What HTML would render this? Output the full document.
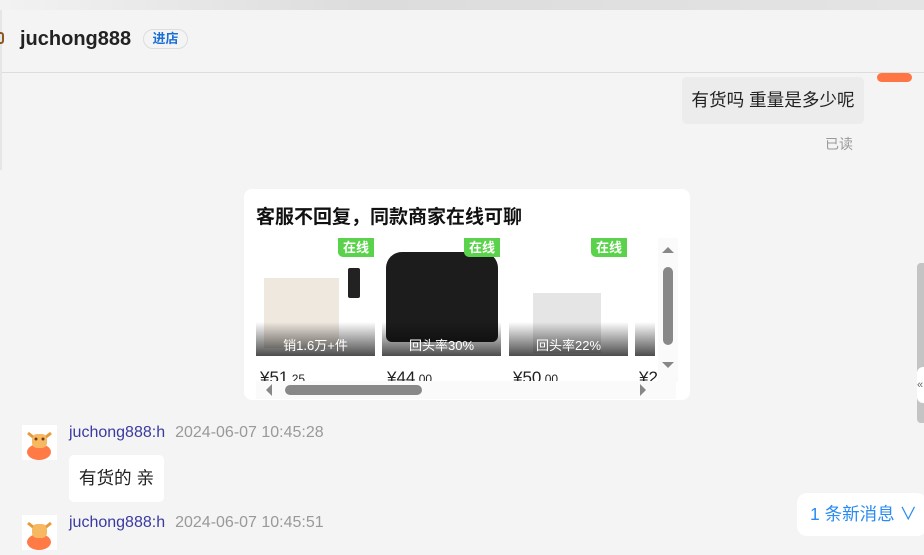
<!DOCTYPE html>
<html><head><meta charset="utf-8"><style>
*{margin:0;padding:0;box-sizing:border-box}
body{width:924px;height:538px;overflow:hidden;background:#f4f4f4;font-family:"Liberation Sans","Noto Sans CJK SC",sans-serif;position:relative}
.a{position:absolute}
.img{position:absolute;top:238px;width:119px;height:118px;overflow:hidden;background:#fff}
.ov{position:absolute;left:0;right:0;bottom:0;height:34px;background:linear-gradient(rgba(0,0,0,0),rgba(0,0,0,.7));color:#fff;font-size:13px;text-align:center;line-height:20px;padding-top:14px}
.tag{position:absolute;right:1px;top:0;background:#5bd24b;color:#fff;font-size:13px;font-weight:bold;padding:0 5px;line-height:19px;border-radius:0 0 0 5px}
.pr{position:absolute;top:368px;font-size:17px;color:#222}
.pr small{font-size:12px}
.name{color:#3a3aa0;font-size:16px}
.time{color:#999;font-size:16px;margin-left:10px}
</style></head><body>
<div class="a" style="left:0;top:0;width:924px;height:10px;background:linear-gradient(90deg,#f2f2f2,#dcdcdc 40%,#e4e4e4)"></div>
<div class="a" style="left:2px;top:10px;width:922px;height:63px;background:#f4f4f4;border-bottom:1px solid #ddd"></div>
<div class="a" style="left:0;top:10px;width:2px;height:160px;background:#e6e6e6"></div>
<div class="a" style="left:-4px;top:32px;width:8px;height:12px;border:2px solid #8a5a20;border-radius:3px"></div>
<div class="a" style="left:20px;top:28px;font-size:20px;font-weight:bold;color:#222">juchong888</div>
<div class="a" style="left:143px;top:29px;width:45px;height:20px;border:1px solid #ddd;border-radius:10px;color:#1a6fd6;font-size:13px;font-weight:bold;text-align:center;line-height:18px">进店</div>
<div class="a" style="left:877px;top:73px;width:35px;height:9px;background:#ff7645;border-radius:5px"></div>
<div class="a" style="left:682px;top:77px;width:182px;height:47px;background:#ececec;border-radius:5px;font-size:17.6px;color:#222;line-height:47px;text-align:center">有货吗 重量是多少呢</div>
<div class="a" style="left:825px;top:134px;font-size:14px;color:#999">已读</div>
<div class="a" style="left:244px;top:189px;width:446px;height:211px;background:#fff;border-radius:8px"></div>
<div class="a" style="left:256px;top:202px;font-size:19px;font-weight:bold;color:#111">客服不回复，同款商家在线可聊</div>
<div class="img" style="left:256px"><div class="a" style="left:8px;top:40px;width:75px;height:70px;background:#efe8df"></div><div class="a" style="left:92px;top:30px;width:12px;height:30px;background:#222;border-radius:2px"></div><div class="ov">销1.6万+件</div><div class="tag">在线</div></div>
<div class="img" style="left:382px"><div class="a" style="left:4px;top:14px;width:112px;height:90px;background:#1c1c1c;border-radius:16px 16px 6px 6px"></div><div class="ov">回头率30%</div><div class="tag">在线</div></div>
<div class="img" style="left:509px"><div class="a" style="left:24px;top:55px;width:68px;height:60px;background:#e5e5e5"></div><div class="ov">回头率22%</div><div class="tag">在线</div></div>
<div class="img" style="left:635px;width:20px"><div class="ov"></div></div>
<div class="pr" style="left:260px">¥51<small>.25</small></div>
<div class="pr" style="left:387px">¥44<small>.00</small></div>
<div class="pr" style="left:513px">¥50<small>.00</small></div>
<div class="pr" style="left:639px">¥2</div>
<div class="a" style="left:658px;top:238px;width:20px;height:144px;background:#fafafa"></div>
<div class="a" style="left:662px;top:247px;border:6px solid transparent;border-bottom:6px solid #888;border-top:0;width:0"></div>
<div class="a" style="left:663px;top:267px;width:10px;height:78px;background:#888;border-radius:5px"></div>
<div class="a" style="left:662px;top:362px;border:6px solid transparent;border-top:6px solid #888;border-bottom:0;width:0"></div>
<div class="a" style="left:256px;top:381px;width:420px;height:18px;background:#fafafa"></div>
<div class="a" style="left:266px;top:384px;border:6px solid transparent;border-right:6px solid #888;border-left:0;height:0"></div>
<div class="a" style="left:285px;top:385px;width:137px;height:10px;background:#888;border-radius:5px"></div>
<div class="a" style="left:640px;top:384px;border:6px solid transparent;border-left:6px solid #888;border-right:0;height:0"></div>
<div class="a" style="left:917px;top:263px;width:7px;height:160px;background:#c4c4c4;border-radius:4px 0 0 4px"></div>
<div class="a" style="left:917px;top:367px;width:7px;height:36px;background:#fff;border-radius:6px 0 0 6px;font-size:11px;color:#666;line-height:36px">«</div>
<div class="a" style="left:22px;top:425px;width:35px;height:35px;background:#fff"><svg width="35" height="35"><ellipse cx="17" cy="27" rx="12" ry="8" fill="#ff7a45"/><rect x="10" y="9" width="15" height="14" rx="5" fill="#f7b862"/><path d="M6 8 L11 12 M29 8 L24 12" stroke="#e89a3a" stroke-width="3"/><circle cx="14" cy="14" r="1.5" fill="#7a3a10"/><circle cx="21" cy="14" r="1.5" fill="#7a3a10"/></svg></div>
<div class="a" style="left:69px;top:424px"><span class="name">juchong888:h</span><span class="time">2024-06-07 10:45:28</span></div>
<div class="a" style="left:69px;top:455px;width:95px;height:47px;background:#fff;border-radius:5px;font-size:17.6px;color:#222;line-height:47px;text-align:center">有货的 亲</div>
<div class="a" style="left:22px;top:515px;width:35px;height:35px;background:#fff"><svg width="35" height="35"><ellipse cx="17" cy="27" rx="12" ry="8" fill="#ff7a45"/><rect x="10" y="9" width="15" height="14" rx="5" fill="#f7b862"/><path d="M6 8 L11 12 M29 8 L24 12" stroke="#e89a3a" stroke-width="3"/></svg></div>
<div class="a" style="left:69px;top:514px"><span class="name">juchong888:h</span><span class="time">2024-06-07 10:45:51</span></div>
<div class="a" style="left:797px;top:493px;width:130px;height:43px;background:#fff;border-radius:10px;color:#2a8cf0;font-size:17.5px;line-height:43px;padding-left:13px">1 条新消息 ∨</div>
</body></html>
